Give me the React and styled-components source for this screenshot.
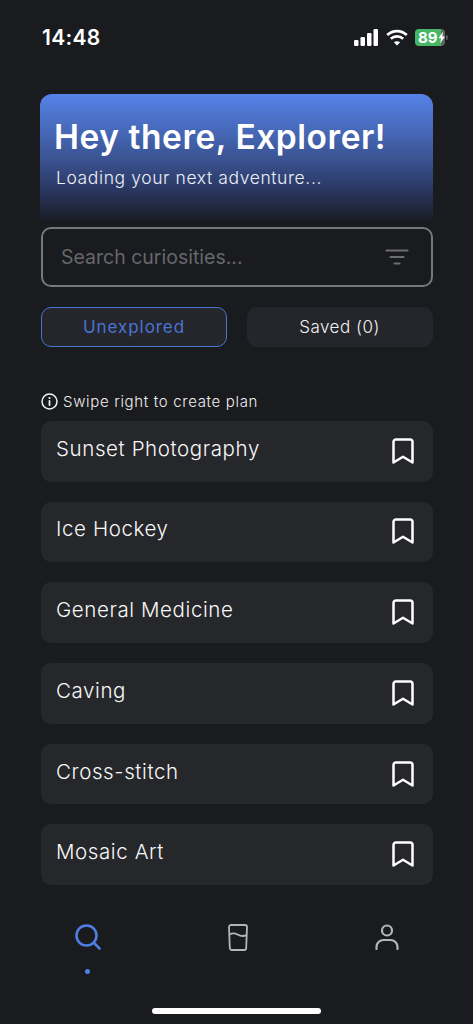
import styled, { createGlobalStyle } from 'styled-components';

const GlobalStyle = createGlobalStyle`
  html, body {
    margin: 0;
    padding: 0;
    background: #1a1b1f;
  }
  * { box-sizing: border-box; }
`;

const Screen = styled.div`
  width: 473px;
  height: 1024px;
  overflow: hidden;
  background: #1a1b1f;
  color: #fff;
  font-family: Inter, "Liberation Sans", sans-serif;
  display: flex;
  flex-direction: column;
`;

const StatusBar = styled.div`
  height: 74px;
  padding: 0 28px 0 42px;
  display: flex;
  align-items: center;
  justify-content: space-between;
`;

const Time = styled.span`
  font-size: 21px;
  font-weight: 600;
  letter-spacing: 0.3px;
`;

const StatusIcons = styled.div`
  display: flex;
  align-items: center;
  gap: 7px;
`;

const Battery = styled.div`
  width: 30px;
  height: 17px;
  padding-left: 3px;
  border-radius: 4px;
  background: linear-gradient(90deg, #45b664 0 87%, #5c6660 87%);
  color: #fff;
  font-size: 15px;
  font-weight: 700;
  display: flex;
  align-items: center;
  position: relative;
  letter-spacing: 0;
  &::after {
    content: '';
    position: absolute;
    right: -3px;
    top: 6px;
    width: 2px;
    height: 5px;
    border-radius: 0 2px 2px 0;
    background: #55585c;
  }
`;

const Main = styled.main`
  padding: 20px 40.5px 0 41px;
  display: flex;
  flex-direction: column;
`;

const Hero = styled.section`
  height: 126px;
  margin: 0 0 0 -1px;
  padding: 24px 14px 0;
  border-radius: 12px 12px 0 0;
  background: linear-gradient(180deg, #5583e8 0%, #4a6fc4 22%, #3a5391 52%, #2a3761 76%, #1b1d27 100%);
`;

const HeroTitle = styled.h1`
  margin: 0;
  font-size: 33.5px;
  line-height: 38px;
  font-weight: 600;
  letter-spacing: 0.55px;
  white-space: nowrap;
`;

const HeroSub = styled.p`
  margin: 11px 0 0 2px;
  font-size: 17.5px;
  line-height: 22px;
  font-weight: 300;
  letter-spacing: 0.6px;
  color: #eef0f7;
`;

const Search = styled.div`
  margin-top: 7px;
  height: 60px;
  border: 2px solid #77787b;
  border-radius: 10px;
  padding: 0 22px 0 18px;
  display: flex;
  align-items: center;
  justify-content: space-between;
`;

const Placeholder = styled.span`
  font-size: 19.5px;
  letter-spacing: 0;
  color: #66676b;
`;

const Tabs = styled.div`
  margin-top: 20px;
  display: grid;
  grid-template-columns: 186px 186px;
  justify-content: space-between;
`;

const Tab = styled.div`
  height: 40px;
  border-radius: 10px;
  background: #25262b;
  border: ${p => (p.$active ? '1.5px solid #4a74d2' : '1.5px solid #25262b')};
  color: ${p => (p.$active ? '#4a74d2' : '#f2f2f2')};
  font-size: 17px;
  font-weight: ${p => (p.$active ? 400 : 300)};
  letter-spacing: ${p => (p.$active ? '0.95px' : '0.5px')};
  display: flex;
  align-items: center;
  justify-content: center;
`;

const Hint = styled.div`
  margin-top: 44px;
  height: 20px;
  display: flex;
  align-items: center;
  gap: 5px;
  font-size: 15px;
  font-weight: 300;
  letter-spacing: 0.67px;
  color: #eeeeee;
`;

const List = styled.div`
  margin-top: 10px;
  display: flex;
  flex-direction: column;
  gap: 20.2px;
`;

const Row = styled.div`
  height: 60.5px;
  border-radius: 10px;
  background: #26272b;
  padding: 0 19px 6px 15px;
  display: flex;
  align-items: center;
  justify-content: space-between;
`;

const RowTitle = styled.span`
  font-size: 20.5px;
  font-weight: 300;
  letter-spacing: 0.6px;
  color: #f8f8f8;
`;

const BookmarkWrap = styled.span`
  display: flex;
  margin-top: 5px;
`;

const Nav = styled.nav`
  margin-top: 39px;
  padding: 0 73px 0 75px;
  height: 52px;
  display: flex;
  justify-content: space-between;
`;

const NavItem = styled.div`
  width: 26px;
  display: flex;
  flex-direction: column;
  align-items: center;
  gap: 19px;
`;

const Dot = styled.span`
  width: 5px;
  height: 5px;
  margin-left: -2px;
  border-radius: 50%;
  background: #5180e3;
`;

const HomeIndicator = styled.div`
  width: 169px;
  height: 6.5px;
  border-radius: 4px;
  background: #fff;
  margin: 32px auto 0;
`;

const SignalIcon = () => (
  <svg width="25" height="17" viewBox="0 0 25 17" fill="#fff">
    <rect x="0" y="11" width="4.5" height="6" rx="1.2" />
    <rect x="6.5" y="8" width="4.5" height="9" rx="1.2" />
    <rect x="13" y="4" width="4.5" height="13" rx="1.2" />
    <rect x="19.5" y="0" width="4.5" height="17" rx="1.2" />
  </svg>
);

const WifiIcon = () => (
  <svg width="22" height="17" viewBox="0 0 22 17" fill="none" stroke="#fff" strokeWidth="2.6">
    <path d="M1.2 6C6.8 .8 15.2 .8 20.8 6" />
    <path d="M4.8 9.8C8.4 6.6 13.6 6.6 17.2 9.8" />
    <path d="M11 16.5 7.9 13.2C9.7 11.8 12.3 11.8 14.1 13.2Z" fill="#fff" stroke="none" />
  </svg>
);

const BoltIcon = () => (
  <svg width="8" height="13" viewBox="0 0 8 13" fill="#fff">
    <path d="M5.5 0 0.5 7.4h2.8L2.4 13l5.1-7.6H4.6Z" />
  </svg>
);

const FilterIcon = () => (
  <svg width="24" height="16" viewBox="0 0 24 16" fill="none" stroke="#6c6d71" strokeWidth="2.2" strokeLinecap="round">
    <path d="M1.5 1.5h21" />
    <path d="M5.5 8h13" />
    <path d="M9.5 14.5h5" />
  </svg>
);

const InfoIcon = () => (
  <svg width="17" height="17" viewBox="0 0 17 17" fill="none" stroke="#f2f2f2" strokeWidth="1.5" strokeLinecap="round">
    <circle cx="8.5" cy="8.5" r="7.5" />
    <path d="M8.5 8v4" strokeWidth="1.8" />
    <circle cx="8.5" cy="5" r="0.5" strokeWidth="1.2" />
  </svg>
);

const BookmarkIcon = () => (
  <svg width="22" height="26" viewBox="0 0 22 26" fill="none" stroke="#fff" strokeWidth="2.5" strokeLinejoin="round">
    <path d="M1.5 4a2.5 2.5 0 0 1 2.5-2.5h14a2.5 2.5 0 0 1 2.5 2.5v20.5L11 18.8 1.5 24.5Z" />
  </svg>
);

const SearchIcon = () => (
  <svg width="26" height="26" viewBox="0 0 26 26" fill="none" stroke="#4f7ee0" strokeWidth="2.6" strokeLinecap="round">
    <circle cx="11.5" cy="11.5" r="10" />
    <path d="M19.5 19.5l5 5" />
  </svg>
);

const GlassIcon = () => (
  <svg width="20" height="27" viewBox="0 0 20 27" fill="none" stroke="#b4b5b8" strokeWidth="1.8" strokeLinejoin="round">
    <path d="M1 3a2 2 0 0 1 2-2h14a2 2 0 0 1 2 2l-.8 21a2 2 0 0 1-2 2H3.8a2 2 0 0 1-2-2Z" />
    <path d="M1.4 10.5c3-1.6 5-1.6 8 0s6 2.2 9.2.6" />
  </svg>
);

const UserIcon = () => (
  <svg width="24" height="26" viewBox="0 0 24 26" fill="none" stroke="#b4b5b8" strokeWidth="2.2" strokeLinecap="round">
    <circle cx="12" cy="6.5" r="5" />
    <path d="M1.5 25v-2a7 7 0 0 1 7-7h7a7 7 0 0 1 7 7v2" />
  </svg>
);

const items = ['Sunset Photography', 'Ice Hockey', 'General Medicine', 'Caving', 'Cross-stitch', 'Mosaic Art'];

export default function App() {
  return (
    <Screen>
      <GlobalStyle />
      <StatusBar>
        <Time>14:48</Time>
        <StatusIcons>
          <SignalIcon />
          <WifiIcon />
          <Battery>89<BoltIcon /></Battery>
        </StatusIcons>
      </StatusBar>
      <Main>
        <Hero>
          <HeroTitle>Hey there, Explorer!</HeroTitle>
          <HeroSub>Loading your next adventure...</HeroSub>
        </Hero>
        <Search>
          <Placeholder>Search curiosities...</Placeholder>
          <FilterIcon />
        </Search>
        <Tabs>
          <Tab $active>Unexplored</Tab>
          <Tab>Saved (0)</Tab>
        </Tabs>
        <Hint>
          <InfoIcon />
          Swipe right to create plan
        </Hint>
        <List>
          {items.map(item => (
            <Row key={item}>
              <RowTitle>{item}</RowTitle>
              <BookmarkWrap><BookmarkIcon /></BookmarkWrap>
            </Row>
          ))}
        </List>
      </Main>
      <Nav>
        <NavItem>
          <SearchIcon />
          <Dot />
        </NavItem>
        <NavItem><GlassIcon /></NavItem>
        <NavItem><UserIcon /></NavItem>
      </Nav>
      <HomeIndicator />
    </Screen>
  );
}
